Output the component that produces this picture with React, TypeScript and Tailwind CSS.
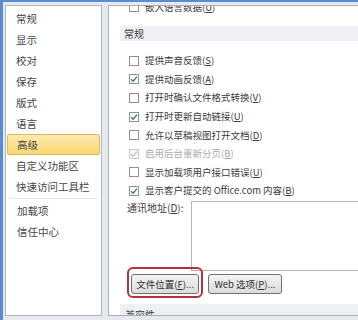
import React from "react";

const FONT = { fontFamily: '"Microsoft YaHei", "Noto Sans CJK SC", "Noto Sans", sans-serif' };

const NAV = ["常规", "显示", "校对", "保存", "版式", "语言", "高级", "自定义功能区", "快速访问工具栏"];
const NAV2 = ["加载项", "信任中心"];

type Opt = { label: string; key: string; checked?: boolean; disabled?: boolean };

const OPTIONS: Opt[] = [
  { label: "提供声音反馈", key: "S" },
  { label: "提供动画反馈", key: "A", checked: true },
  { label: "打开时确认文件格式转换", key: "V" },
  { label: "打开时更新自动链接", key: "U", checked: true },
  { label: "允许以草稿视图打开文档", key: "D" },
  { label: "启用后台重新分页", key: "B", checked: true, disabled: true },
  { label: "显示加载项用户接口错误", key: "U" },
  { label: "显示客户提交的 Office.com 内容", key: "B", checked: true },
];

function Box({ checked, disabled }: { checked?: boolean; disabled?: boolean }) {
  return (
    <span
      className={`w-[10px] h-[10px] shrink-0 border flex items-center justify-center ${
        disabled ? "border-[#c8c8c8] bg-[#f7f7f7]" : "border-[#8e8f8f] bg-white"
      }`}>
      {checked && (
        <svg width="8" height="8" viewBox="0 0 8 8">
          <path
            d="M1 4.2 L3.1 6.3 L7 1.6"
            fill="none"
            stroke={disabled ? "#b9c9b9" : "#2f8a3e"}
            strokeWidth="1.4"
          />
        </svg>
      )}
    </span>
  );
}

function Row({ o }: { o: Opt }) {
  return (
    <div className="h-[18.6px] flex items-center gap-[6px] pl-[20px]">
      <Box checked={o.checked} disabled={o.disabled} />
      <span className={`text-[9.5px] leading-none ${o.disabled ? "text-[#ababab]" : "text-[#3a3a3a]"}`}>
        {o.label}(<span className="underline">{o.key}</span>)
      </span>
    </div>
  );
}

export default function App() {
  return (
    <div
      className="w-[358px] h-[320px] overflow-hidden bg-[#e6e9ed] border-t-[2px] border-l-[3px] border-[#5b8bd2] flex gap-[6px] pl-[2px] pt-[3px] pb-[4px]"
      style={FONT}>
      <div className="w-[97px] shrink-0 bg-white border border-[#adb5bf] pt-[2px] px-px">
        {NAV.map((n) => (
          <div
            key={n}
            className={`h-[21px] flex items-center pl-[9px] text-[10.5px] text-[#454545] ${
              n === "高级"
                ? "bg-gradient-to-b from-[#fdeab0] to-[#fbd770] border border-[#e2b658] rounded-[2px]"
                : ""
            }`}>
            {n}
          </div>
        ))}
        <div className="h-px bg-[#e4e6e8] mx-[2px] my-[1px]" />
        {NAV2.map((n) => (
          <div key={n} className="h-[21px] flex items-center pl-[10px] text-[10.5px] text-[#454545]">
            {n}
          </div>
        ))}
      </div>

      <div className="flex-1 bg-white border-l border-t border-b border-[#a8afb8] overflow-hidden flex flex-col">
        <div className="-mt-[8px]">
          <Row o={{ label: "嵌入语言数据", key: "U" }} />
        </div>
        <div className="mt-[9px] ml-[11px] h-[16px] bg-[#eef0f3] flex items-center pl-[4px] text-[10px] text-[#3a3a3a]">
          常规
        </div>
        <div className="mt-[11px]">
          {OPTIONS.map((o, i) => (
            <Row key={i} o={o} />
          ))}
        </div>
        <div className="mt-px flex items-start">
          <span className="pl-[18px] w-[82px] shrink-0 text-[10px] leading-[14px] text-[#3a3a3a]">
            通讯地址(<span className="underline">D</span>):
          </span>
          <div className="flex-1 h-[70px] border-l border-t border-b border-[#b4b8bd] bg-white" />
        </div>
        <div className="mt-[3px] flex gap-[9px] pl-[22px]">
          <div className="relative">
            <div className="w-[68px] h-[20px] border border-[#707070] rounded-[3px] bg-gradient-to-b from-[#f4f4f4] to-[#dcdcdc] flex items-center justify-center text-[9.5px] text-[#2e2e2e]">
              文件位置(<span className="underline">F</span>)...
            </div>
            <div className="absolute -left-[4px] -right-[4px] -top-[7px] -bottom-[4px] border-2 border-[#b3323c] rounded-[6px]" />
          </div>
          <div className="w-[74px] h-[20px] border border-[#707070] rounded-[3px] bg-gradient-to-b from-[#f4f4f4] to-[#dcdcdc] flex items-center justify-center text-[9.5px] text-[#2e2e2e]">
            Web 选项(<span className="underline">P</span>)...
          </div>
        </div>
        <div className="mt-[10px] ml-[11px] flex-1 bg-[#eef0f4] pl-[5px] pt-[4px] text-[10px] leading-[14px] text-[#3a3a3a]">
          兼容性
        </div>
      </div>
    </div>
  );
}
